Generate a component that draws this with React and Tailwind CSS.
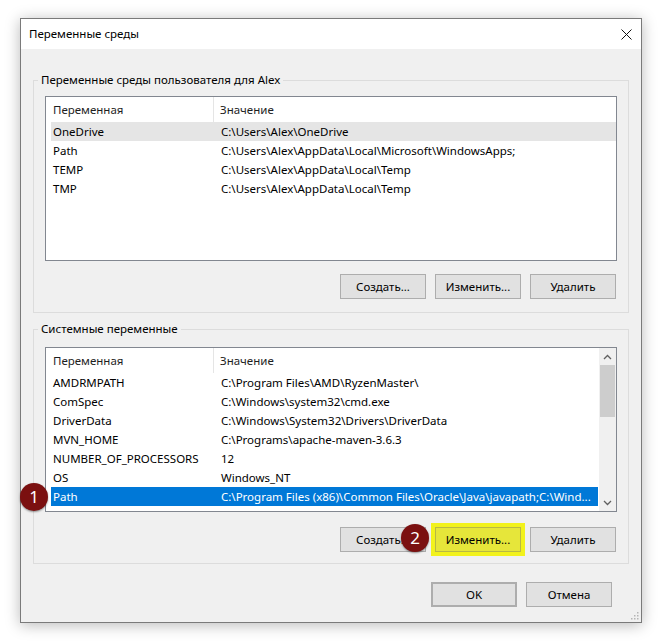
const userVars = [
  { name: "OneDrive", value: "C:\\Users\\Alex\\OneDrive", hover: true },
  { name: "Path", value: "C:\\Users\\Alex\\AppData\\Local\\Microsoft\\WindowsApps;" },
  { name: "TEMP", value: "C:\\Users\\Alex\\AppData\\Local\\Temp" },
  { name: "TMP", value: "C:\\Users\\Alex\\AppData\\Local\\Temp" },
];

const systemVars = [
  { name: "AMDRMPATH", value: "C:\\Program Files\\AMD\\RyzenMaster\\" },
  { name: "ComSpec", value: "C:\\Windows\\system32\\cmd.exe" },
  { name: "DriverData", value: "C:\\Windows\\System32\\Drivers\\DriverData" },
  { name: "MVN_HOME", value: "C:\\Programs\\apache-maven-3.6.3" },
  { name: "NUMBER_OF_PROCESSORS", value: "12" },
  { name: "OS", value: "Windows_NT" },
  {
    name: "Path",
    value: "C:\\Program Files (x86)\\Common Files\\Oracle\\Java\\javapath;C:\\Wind...",
    selected: true,
  },
];

const Button = ({ children, className = "" }) => (
  <button
    className={`h-[25px] w-[86px] border border-[#adadad] bg-[#e1e1e1] text-black ${className}`}
  >
    {children}
  </button>
);

const Badge = ({ n, className = "" }) => (
  <div
    className={`absolute flex h-[28px] w-[28px] items-center justify-center rounded-full bg-[#7b1010] text-[17px] text-white shadow-[0_1px_2px_rgba(0,0,0,0.4)] ${className}`}
  >
    {n}
  </div>
);

const VarList = ({ rows, scroll = false }) => (
  <div className="flex h-[165px] min-w-0 border border-[#828790] bg-white">
    <div className="flex min-w-0 flex-1 flex-col overflow-hidden">
      <div className="flex h-[25px] shrink-0 items-center text-[#1e1e1e]">
        <div className="flex h-full w-[168px] items-center border-r border-[#e5e5e5] pl-[7px]">
          Переменная
        </div>
        <div className="pl-[6px]">Значение</div>
      </div>
      {rows.map((r) => (
        <div
          key={r.name}
          className={`ml-[5px] flex h-[19px] shrink-0 items-center overflow-hidden whitespace-nowrap ${
            r.selected ? "mr-[1px] bg-[#0078d7] text-white" : r.hover ? "bg-[#e5e5e5]" : ""
          }`}
        >
          <div className="w-[163px] shrink-0 pl-[2px]">{r.name}</div>
          <div className="pl-[7px]">{r.value}</div>
        </div>
      ))}
    </div>
    {scroll && (
      <div className="flex w-[17px] shrink-0 flex-col bg-[#f0f0f0]">
        <div className="flex h-[17px] items-center justify-center">
          <svg width="9" height="6" viewBox="0 0 9 6">
            <path d="M1 5 L4.5 1.5 L8 5" fill="none" stroke="#606060" strokeWidth="1.3" />
          </svg>
        </div>
        <div className="mx-[1px] h-[52px] bg-[#cdcdcd]" />
        <div className="flex-1" />
        <div className="flex h-[17px] items-center justify-center">
          <svg width="9" height="6" viewBox="0 0 9 6">
            <path d="M1 1 L4.5 4.5 L8 1" fill="none" stroke="#606060" strokeWidth="1.3" />
          </svg>
        </div>
      </div>
    )}
  </div>
);

const App = () => {
  return (
    <div className="h-[644px] w-[659px] bg-white pl-[20px] pt-[18px] font-[family-name:'Noto_Sans',sans-serif] text-[11.5px] leading-[16px] text-black">
      <div className="relative flex h-[605px] w-[622px] flex-col border border-[#7a7a7a] shadow-[0_2px_14px_rgba(0,0,0,0.28)]">
        <div className="flex h-[30px] shrink-0 items-center justify-between bg-white pl-[8px] pr-[9px]">
          <span>Переменные среды</span>
          <svg width="11" height="11" viewBox="0 0 11 11">
            <path d="M0.5 0.5 L10.5 10.5 M10.5 0.5 L0.5 10.5" stroke="#111" strokeWidth="1" />
          </svg>
        </div>

        <div className="flex flex-1 flex-col bg-[#f0f0f0] px-[12px] pt-[23px]">
          <fieldset className="min-w-0 border border-[#dcdcdc] px-[11px] pb-[13px] pt-[8px]">
            <legend className="ml-[-7px] px-[3px]">Переменные среды пользователя для Alex</legend>
            <VarList rows={userVars} />
            <div className="mt-[13px] flex justify-end gap-[9px] pr-[1px]">
              <Button>Создать...</Button>
              <Button>Изменить...</Button>
              <Button>Удалить</Button>
            </div>
          </fieldset>

          <fieldset className="relative mt-[8px] min-w-0 border border-[#dcdcdc] px-[11px] pb-[11px] pt-[10px]">
            <legend className="ml-[-7px] px-[3px]">Системные переменные</legend>
            <VarList rows={systemVars} scroll />
            <div className="mt-[15px] flex justify-end gap-[9px] pr-[1px]">
              <Button>Создать...</Button>
              <Button className="border-[#b8b845] bg-[#e6e63a] outline-4 outline-[#f2f21c]">
                Изменить...
              </Button>
              <Button>Удалить</Button>
            </div>
            <Badge n="1" className="left-[-14px] top-[146px]" />
            <Badge n="2" className="left-[367px] top-[187px]" />
          </fieldset>

          <div className="mt-[18px] flex justify-end gap-[9px] pr-[17px]">
            <Button className="border-2 border-[#0078d7]">OK</Button>
            <Button>Отмена</Button>
          </div>
        </div>

        <svg className="absolute bottom-[2px] right-[2px]" width="10" height="10" viewBox="0 0 10 10">
          <g fill="#b5b5b5">
            <rect x="8" y="2" width="1.5" height="1.5" />
            <rect x="5" y="5" width="1.5" height="1.5" />
            <rect x="8" y="5" width="1.5" height="1.5" />
            <rect x="2" y="8" width="1.5" height="1.5" />
            <rect x="5" y="8" width="1.5" height="1.5" />
            <rect x="8" y="8" width="1.5" height="1.5" />
          </g>
        </svg>
      </div>
    </div>
  );
};

export default App;
